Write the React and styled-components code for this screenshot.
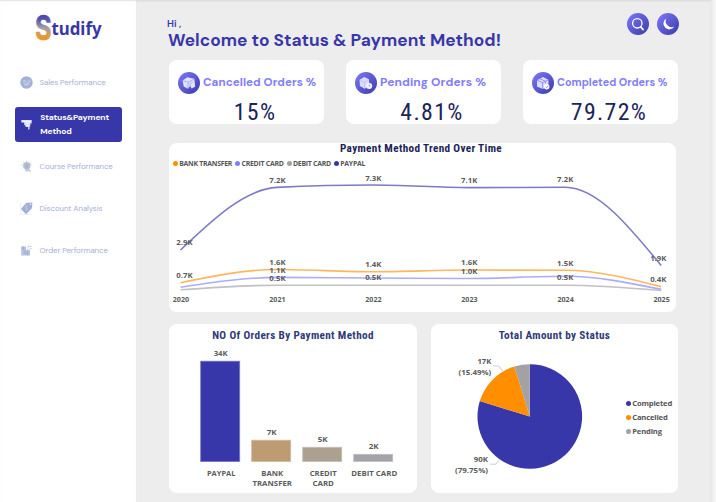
import React from "react";
import styled, { createGlobalStyle } from "styled-components";

const GlobalStyle = createGlobalStyle`
  * { box-sizing: border-box; }
  body { margin: 0; overflow: hidden; background: #f3f3f3; }
`;

const sans = `"DM Sans", Inter, "Open Sans", sans-serif`;
const din = `Roboto, "Liberation Sans", sans-serif`;
const segoe = `"Open Sans", "Noto Sans", sans-serif`;

const Page = styled.div`
  display: flex;
  width: 716px;
  height: 502px;
  background: linear-gradient(90deg, #e6e6e6 711px, #ececec 712px, #f4f4f4 714px);
  font-family: ${sans};
`;

const Sidebar = styled.aside`
  width: 136px;
  height: 502px;
  background: #fff;
  box-shadow: inset 0 2px 2px -1px #e2e2e2;
  padding-top: 12px;
`;

const Main = styled.main`
  width: 575px;
  height: 502px;
  background: #ededed;
  box-shadow: inset 0 2px 2px -1px #dadada;
  padding: 12px 32px 9px 33px;
`;

const LogoSvg = styled.svg`
  display: block;
  width: 76px;
  height: 32px;
  margin-left: 32px;
  overflow: visible;
`;

const Nav = styled.nav`
  display: flex;
  flex-direction: column;
  gap: 7px;
  padding: 21px 14px 0 15px;
`;

const NavItem = styled.a`
  display: flex;
  align-items: center;
  height: 35px;
  padding-left: 5px;
  border-radius: 3px;
  background: ${(p) => (p.$active ? "#3837a9" : "transparent")};
  color: ${(p) => (p.$active ? "#fff" : "#a6b0d6")};
  font-size: ${(p) => (p.$active ? "8.45px" : "7.9px")};
  font-weight: ${(p) => (p.$active ? 700 : 400)};
  line-height: 14px;
  letter-spacing: -0.1px;
  white-space: nowrap;

  svg {
    flex: none;
    width: 13px;
    height: 13px;
    margin-right: ${(p) => (p.$active ? "7.2px" : "6.5px")};
  }
  span {
    padding-top: ${(p) => (p.$active ? "1px" : 0)};
    padding-bottom: ${(p) => (p.$active ? 0 : "2px")};
  }
`;

const Header = styled.header`
  display: flex;
  justify-content: space-between;
  height: 48px;
`;

const Greeting = styled.div`
  color: #3837a9;
`;

const Hi = styled.div`
  font-size: 9.9px;
  font-weight: 600;
  line-height: 12px;
  height: 18px;
  padding-top: 6px;
  margin-left: -2px;
`;

const Welcome = styled.h1`
  margin: 0 0 0 -1px;
  font-size: 17.3px;
  font-weight: 700;
  line-height: 20px;
  letter-spacing: 0.02px;
  white-space: nowrap;
`;

const Actions = styled.div`
  display: flex;
  gap: 8px;
  padding-top: 0.5px;
`;

const RoundButton = styled.button`
  width: 22px;
  height: 22px;
  padding: 0;
  border: 0;
  border-radius: 50%;
  background: linear-gradient(135deg, #7d7bf8, #3a39ab);
  svg { display: block; width: 22px; height: 22px; }
`;

const Stats = styled.section`
  display: grid;
  grid-template-columns: repeat(3, 155px);
  gap: 22px;
  margin-bottom: 19px;
`;

const Card = styled.section`
  background: #fff;
  border-radius: 8px;
  width: ${(p) => p.$w}px;
  height: ${(p) => p.$h}px;
`;

const StatCard = styled(Card)`
  padding-top: 12px;
`;

const StatHead = styled.div`
  display: flex;
  align-items: center;
  height: 22px;
  margin-left: 9px;
`;

const StatIcon = styled.span`
  flex: none;
  width: 22px;
  height: 22px;
  border-radius: 50%;
  background: linear-gradient(135deg, #7d7bf8, #3a39ab);
  margin-right: 3px;
  svg { display: block; width: 22px; height: 22px; }
`;

const StatLabel = styled.span`
  color: #807dfb;
  font-size: ${(p) => p.$size}px;
  font-weight: 700;
  line-height: 18px;
  padding-bottom: 2px;
  letter-spacing: ${(p) => p.$track}px;
  white-space: nowrap;
`;

const StatValue = styled.div`
  padding-left: 17px;
  color: #1b2559;
  font-family: ${din};
  font-size: 23.8px;
  font-stretch: 75%;
  line-height: 24px;
  margin-top: 6px;
  letter-spacing: 1.35px;
  text-align: center;
`;

const ChartTitle = styled.h2`
  margin: 0;
  height: ${(p) => (p.$top ? 18 : 13)}px;
  padding-top: ${(p) => p.$top || 0}px;
  padding-right: ${(p) => (p.$top ? 0 : 3)}px;
  color: ${(p) => (p.$top ? "#2f3b78" : "#1b2559")};
  font-family: ${din};
  font-size: 11.2px;
  font-stretch: 75%;
  font-weight: 700;
  line-height: ${(p) => (p.$top ? 13 : 11)}px;
  letter-spacing: 0.35px;
  text-align: center;
  white-space: nowrap;
`;

const TrendLegend = styled.div`
  display: flex;
  height: 14px;
  padding: 1px 0 0 4px;
  gap: 3.2px;
`;

const LegendItem = styled.span`
  display: flex;
  align-items: center;
  color: #555;
  font-family: ${segoe};
  font-size: ${(p) => p.$size}px;
  font-weight: 700;
  line-height: 14px;
  letter-spacing: ${(p) => p.$track}px;
  white-space: nowrap;

  &::before {
    content: "";
    width: 5px;
    height: 5px;
    margin-right: 1.2px;
    border-radius: 50%;
    background: ${(p) => p.$color};
  }
`;

const Plot = styled.svg`
  display: block;
  flex: none;
  font-family: ${segoe};
  font-weight: 700;
`;

const BottomRow = styled.div`
  display: flex;
  gap: 14px;
  margin-top: 12px;
`;

const PieBody = styled.div`
  display: flex;
`;

const PieLegend = styled.div`
  display: flex;
  flex-direction: column;
  margin-top: 54px;
  margin-left: 1px;
`;

const Label = ({ x, y, w, size = 7.8, children, anchor = "middle" }) => (
  <text x={x} y={y} fontSize={size} textAnchor={anchor} textLength={w} lengthAdjust="spacingAndGlyphs" fill="#5c5b5b">
    {children}
  </text>
);

const SalesIcon = () => (
  <svg viewBox="0 0 13 13">
    <circle cx="6.5" cy="6.5" r="6.2" fill="#a4b1d6" />
    <path d="M2.5 4.5 5 3.8 6.2 6 9.7 3.2 11 4.4 7.8 9.8 4.7 9.4Z" fill="#c2cbe4" />
    <path d="M3.3 5.2 6 7.5 10 4.2" fill="none" stroke="#96a5cf" strokeWidth=".7" />
  </svg>
);
const PaymentIcon = () => (
  <svg viewBox="0 0 13 13">
    <path d="M1.3 2.1h10.4v3.3h-1.4v3.2H9.5v2.8H8.1V9.1H5.5V7.2H4.2V4.4H1.3Z" fill="#dddff5" />
    <path d="M2.2 3.3h8.5M6 5.3h3.6M6.3 7.5h2.9" stroke="#fff" strokeWidth=".8" />
  </svg>
);
const CourseIcon = () => (
  <svg viewBox="0 0 13 13">
    <path d="M6.5 .7v1.2M1.3 4.7l1.3.5M11.7 4.2l-1.3.6M2.5 1.9l1 1M10.8 1.8l-1.1 1.1M1.5 8.2l1-.4" stroke="#bcc6de" strokeWidth=".8" />
    <circle cx="6.8" cy="5.7" r="3.7" fill="#b4bed3" />
    <path d="M5 8.5h4l2 3.3H9.4L7.8 10v1.5H5.6Z" fill="#bbc5dc" />
    <path d="M5.4 5.8 6.8 4.6 8.4 5.8M6.8 5.5v3" fill="none" stroke="#9eabc7" strokeWidth=".8" />
  </svg>
);
const DiscountIcon = () => (
  <svg viewBox="0 0 13 13">
    <path d="M.6 1v11.5h11" fill="none" stroke="#e0e4f1" strokeWidth=".6" />
    <path d="M6.3 .8 12.3.5 12 6.3 6 12.2.9 7Z" fill="#a1afd6" />
    <circle cx="10.5" cy="2.3" r=".7" fill="#fff" />
    <path d="M7.4 3.7C6 3.3 5.3 4.8 6.4 5.8S7 8.5 5.6 7.8" fill="none" stroke="#dbe2f1" strokeWidth=".7" />
  </svg>
);
const OrderIcon = () => (
  <svg viewBox="0 0 13 13">
    <path d="M1 2.5h5v3.3H1ZM1.3 5.8h8.7v5.7H1.3Z" fill="#b4c0de" />
    <path d="M8 5.3V2.5h3.5M8.5 1.2h1M10 4.7h2" fill="none" stroke="#c0cae3" strokeWidth=".8" />
    <path d="M3.5 2.5v3.3M5 7v3M7.4 8v3.4" stroke="#99a8cf" strokeWidth=".9" />
  </svg>
);

const BoxIcon = ({ variant }) => (
  <svg viewBox="0 0 22 22">
    {variant === "cancelled" && (
      <>
        <path d="M4.6 8.6 9.3 5.2l7 1.6.9 8-3.6 1.6-1.5-2.3-2.2 2.7-4.2-2.3Z" fill="#e2e2fc" />
        <path d="m4.8 8.7 5.3 1.5 6-3.2M10.1 10.2l-.2 6.2M12 14l.2-2.7 2.3-1" fill="none" stroke="#9f9ee8" strokeWidth=".8" />
      </>
    )}
    {variant === "pending" && (
      <>
        <path d="m4.6 7.8 4.8-2.7 4.6 2.2.3 6.4-4.6 3-4.8-2.7Z" fill="#dcdcfa" />
        <path d="m4.7 8 4.9 2.1L14 7.4M9.6 10.1v6.4" fill="none" stroke="#b5b4f0" strokeWidth=".6" />
        <circle cx="14.2" cy="14" r="3" fill="#f3f3ff" />
        <path d="M14.2 12.3v1.9h1.3" fill="none" stroke="#8b8ae0" strokeWidth=".7" />
      </>
    )}
    {variant === "completed" && (
      <>
        <path d="M5 8.2 11 5l5.4 2.7v6.7L10.6 17 5 14.4Z" fill="#dcdcfa" />
        <path d="m5 8.3 5.6 2.4 5.8-2.9M10.6 10.7V17M7.8 6.8l5.7 2.5v2.3" fill="none" stroke="#8483df" strokeWidth=".8" />
        <circle cx="14.7" cy="14.7" r="2.7" fill="#fff" />
        <path d="m13.4 14.7 1 1 1.8-2" fill="none" stroke="#7776d8" strokeWidth=".8" />
      </>
    )}
  </svg>
);

const navItems = [
  { icon: SalesIcon, text: "Sales Performance" },
  { icon: PaymentIcon, text: <>Status&amp;Payment<br />Method</>, active: true },
  { icon: CourseIcon, text: "Course Performance" },
  { icon: DiscountIcon, text: "Discount Analysis" },
  { icon: OrderIcon, text: "Order Performance" },
];

const stats = [
  { variant: "cancelled", label: "Cancelled Orders %", value: "15%", size: 11.6, track: 0.05 },
  { variant: "pending", label: "Pending Orders %", value: "4.81%", size: 12, track: 0.1 },
  { variant: "completed", label: "Completed Orders %", value: "79.72%", size: 10.8, track: 0 },
];

const years = [2020, 2021, 2022, 2023, 2024, 2025];
const xs = [180.5, 277, 373, 469, 565.2, 661.2];
const series = [
  { color: "#c1c1c5", ys: [289.8, 285.2, 285.2, 285.2, 285.2, 290.5] },
  { color: "#acabff", ys: [287.2, 277.4, 278, 278.5, 276.3, 289.4] },
  { color: "#ffb75e", ys: [282.8, 269.5, 271.7, 270, 270.3, 286.6] },
  { color: "#7c7ac9", ys: [250, 187.4, 185, 187.6, 187.3, 265.5] },
];

// Monotone cubic interpolation through the data points.
function smoothPath(px, py) {
  const n = px.length;
  const d = [];
  for (let i = 0; i < n - 1; i++) d.push((py[i + 1] - py[i]) / (px[i + 1] - px[i]));
  const m = new Array(n).fill(0);
  for (let i = 1; i < n - 1; i++) {
    m[i] = d[i - 1] * d[i] <= 0 ? 0 : (2 * d[i - 1] * d[i]) / (d[i - 1] + d[i]);
  }
  m[0] = (3 * d[0] - m[1]) / 2;
  m[n - 1] = (3 * d[n - 2] - m[n - 2]) / 2;
  let path = `M${px[0]} ${py[0]}`;
  for (let i = 0; i < n - 1; i++) {
    const h = (px[i + 1] - px[i]) / 3;
    path += `C${px[i] + h} ${py[i] + h * m[i]} ${px[i + 1] - h} ${py[i + 1] - h * m[i + 1]} ${px[i + 1]} ${py[i + 1]}`;
  }
  return path;
}

const pointLabels = [
  [184.5, 245, "2.9K"], [277.5, 183, "7.2K"], [373.3, 181, "7.3K"], [469.2, 183, "7.1K"], [565.2, 182, "7.2K"], [658.3, 261, "1.9K"],
  [184.5, 278, "0.7K"], [277.5, 265, "1.6K"], [373.3, 267, "1.4K"], [469.2, 265, "1.6K"], [565.2, 266, "1.5K"], [658.3, 282, "0.4K"],
  [277.5, 273, "1.1K"], [277.5, 281, "0.5K"], [373.3, 280, "0.5K"], [469.2, 274, "1.0K"], [565.2, 280, "0.5K"],
];

const trendLegend = [
  ["BANK TRANSFER", "#ff8e00"],
  ["CREDIT CARD", "#807dff"],
  ["DEBIT CARD", "#a2a2a5"],
  ["PAYPAL", "#3837a9"],
];

const bars = [
  { x: 200.7, y: 361.2, color: "#3837a9", edge: "#7675c6", value: "34K", vw: 14, lines: [["PAYPAL", 28.5]] },
  { x: 251.7, y: 440.2, color: "#bd9b73", edge: "#d1b99c", value: "7K", vw: 10, lines: [["BANK", 22], ["TRANSFER", 39.5]] },
  { x: 302.7, y: 447.3, color: "#aca090", edge: "#c5bdb2", value: "5K", vw: 10, lines: [["CREDIT", 27], ["CARD", 21.5]] },
  { x: 353.7, y: 454.3, color: "#a2a2a8", edge: "#bebec2", value: "2K", vw: 10, lines: [["DEBIT CARD", 46]] },
];

const pie = { cx: 529.8, cy: 416.5, r: 52.3 };
const slices = [
  { share: 0.7975, color: "#3837a9" },
  { share: 0.1549, color: "#ff8e00" },
  { share: 0.0476, color: "#a2a2a5" },
];

function slicePath(from, share) {
  const point = (t) => {
    const a = t * Math.PI * 2;
    return `${pie.cx + pie.r * Math.sin(a)} ${pie.cy - pie.r * Math.cos(a)}`;
  };
  return `M${pie.cx} ${pie.cy}L${point(from)}A${pie.r} ${pie.r} 0 ${share > 0.5 ? 1 : 0} 1 ${point(from + share)}Z`;
}

function Logo() {
  return (
    <LogoSvg viewBox="32 12 76 32" role="img" aria-label="Studify">
      <defs>
        <linearGradient id="logoS" x1="0" y1="15" x2="0" y2="41" gradientUnits="userSpaceOnUse">
          <stop offset="0" stopColor="#4442ad" />
          <stop offset=".2" stopColor="#5a58ab" />
          <stop offset=".5" stopColor="#a3a0ac" />
          <stop offset=".72" stopColor="#d99b50" />
          <stop offset="1" stopColor="#f39420" />
        </linearGradient>
      </defs>
      <text x="35" y="40.2" fontFamily="Inter" fontWeight="700" fontSize="34" textLength="16.6" lengthAdjust="spacingAndGlyphs" fill="url(#logoS)" stroke="url(#logoS)" strokeWidth=".7">S</text>
      <text x="51.5" y="34.8" fontFamily="Noto Sans" fontWeight="700" fontSize="18" textLength="50" lengthAdjust="spacingAndGlyphs" fill="#3837a9">tudify</text>
    </LogoSvg>
  );
}

export default function App() {
  let start = 0;
  return (
    <Page>
      <GlobalStyle />
      <Sidebar>
        <Logo />
        <Nav>
          {navItems.map(({ icon: Icon, text, active }, i) => (
            <NavItem key={i} $active={active}>
              <Icon />
              <span>{text}</span>
            </NavItem>
          ))}
        </Nav>
      </Sidebar>
      <Main>
        <Header>
          <Greeting>
            <Hi>Hi ,</Hi>
            <Welcome>Welcome to Status &amp; Payment Method!</Welcome>
          </Greeting>
          <Actions>
            <RoundButton aria-label="Search">
              <svg viewBox="0 0 22 22" fill="none" stroke="#fff" strokeLinecap="round">
                <circle cx="10.3" cy="10.3" r="4.7" strokeWidth="1.3" />
                <path d="m13.8 13.9 2.3 2.7" strokeWidth="1.7" />
              </svg>
            </RoundButton>
            <RoundButton aria-label="Dark mode">
              <svg viewBox="0 0 22 22">
                <path d="M9.3 5.4a5.9 5.9 0 1 0 8 8.2 6.1 6.1 0 0 1-8-8.2Z" fill="#fff" />
              </svg>
            </RoundButton>
          </Actions>
        </Header>

        <Stats>
          {stats.map((s) => (
            <StatCard key={s.variant} $w={155} $h={64}>
              <StatHead>
                <StatIcon><BoxIcon variant={s.variant} /></StatIcon>
                <StatLabel $size={s.size} $track={s.track}>{s.label}</StatLabel>
              </StatHead>
              <StatValue>{s.value}</StatValue>
            </StatCard>
          ))}
        </Stats>

        <Card $w={507} $h={169}>
          <ChartTitle>Payment Method Trend Over Time</ChartTitle>
          <TrendLegend>
            {trendLegend.map(([name, color]) => (
              <LegendItem key={name} $color={color} $size={6.9} $track={-0.25}>{name}</LegendItem>
            ))}
          </TrendLegend>
          <Plot width="507" height="142" viewBox="169 170 507 142">
            {series.map((s) => (
              <path key={s.color} d={smoothPath(xs, s.ys)} fill="none" stroke={s.color} strokeWidth="1.6" />
            ))}
            {pointLabels.map(([x, y, t], i) => (
              <Label key={i} x={x} y={y} w={16.3}>{t}</Label>
            ))}
            {years.map((year, i) => (
              <Label key={year} x={xs[i] + 0.4} y={302} w={16.3} size={7}>{year}</Label>
            ))}
          </Plot>
        </Card>

        <BottomRow>
          <Card $w={248} $h={169}>
            <ChartTitle $top={5}>NO Of Orders By Payment Method</ChartTitle>
            <Plot width="248" height="151" viewBox="169 342 248 151">
              {bars.map((b) => (
                <g key={b.value}>
                  <rect x={b.x} y={b.y} width="39" height={461.5 - b.y} fill={b.color} stroke={b.edge} strokeWidth=".8" />
                  <Label x={b.x + 20} y={b.y - 5} w={b.vw}>{b.value}</Label>
                  {b.lines.map(([t, w], i) => (
                    <Label key={t} x={b.x + 20.5} y={476 + i * 10} w={w}>{t}</Label>
                  ))}
                </g>
              ))}
            </Plot>
          </Card>

          <Card $w={247} $h={169}>
            <ChartTitle $top={5}>Total Amount by Status</ChartTitle>
            <PieBody>
              <Plot width="194" height="151" viewBox="431 342 194 151">
                {slices.map((s) => {
                  const d = slicePath(start, s.share);
                  start += s.share;
                  return <path key={s.color} d={d} fill={s.color} />;
                })}
                <path d="M493 366h6l3.5 5M490 464.2h6l4-5.2" fill="none" stroke="#c8c8c8" strokeWidth=".9" />
                <Label x={491.3} y={364} w={13.8} anchor="end">17K</Label>
                <Label x={491.3} y={375} w={32.8} anchor="end">(15.49%)</Label>
                <Label x={488} y={462} w={14.3} anchor="end">90K</Label>
                <Label x={488} y={473} w={33} anchor="end">(79.75%)</Label>
              </Plot>
              <PieLegend>
                <LegendItem $color="#3837a9" $size={7.6} $track={-0.15}>Completed</LegendItem>
                <LegendItem $color="#ff8e00" $size={7.6} $track={-0.15}>Cancelled</LegendItem>
                <LegendItem $color="#a2a2a5" $size={7.6} $track={-0.15}>Pending</LegendItem>
              </PieLegend>
            </PieBody>
          </Card>
        </BottomRow>
      </Main>
    </Page>
  );
}
